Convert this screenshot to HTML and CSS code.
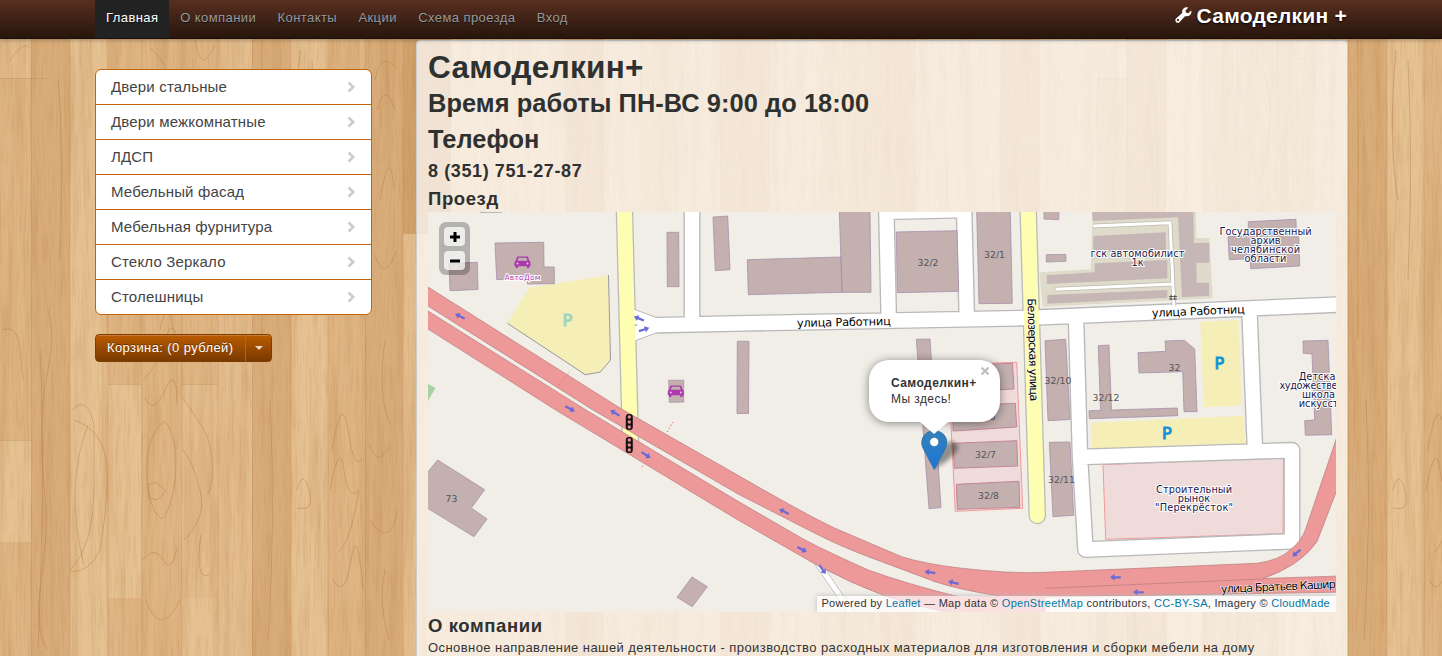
FILE: index.html
```html
<!DOCTYPE html>
<html lang="ru">
<head>
<meta charset="utf-8">
<title>Самоделкин+</title>
<link rel="stylesheet" href="styles.css">
</head>
<body>
<svg class="wood" width="1442" height="656" aria-hidden="true">
  <defs>
    <filter id="grain" x="0" y="0" width="100%" height="100%" color-interpolation-filters="sRGB">
      <feTurbulence type="fractalNoise" baseFrequency="0.1 0.005" numOctaves="3" seed="7"/>
      <feColorMatrix values="0 0 0 0 .72  0 0 0 0 .5  0 0 0 0 .26  .6 0 0 0 -.26"/>
    </filter>
    <filter id="fine" x="0" y="0" width="100%" height="100%" color-interpolation-filters="sRGB">
      <feTurbulence type="fractalNoise" baseFrequency="0.5 0.03" numOctaves="2" seed="3"/>
      <feColorMatrix values="0 0 0 0 .65  0 0 0 0 .43  0 0 0 0 .22  .4 0 0 0 -.18"/>
    </filter>
    <pattern id="planks" width="1096" height="656" patternUnits="userSpaceOnUse">
      <rect width="1096" height="656" fill="#e3bd8e"/>
      <g fill="#d9ad7a">
        <path d="M31 0h39v656H31zM252 0h39v656h-39zM365 0h38v656h-38zM565 0h38v656h-38zM720 0h50v656h-50zM880 0h36v656h-36zM1000 0h40v656h-40z"/>
        <path d="M403 0h48v234h-48z" fill="#d1a26c"/>
      </g>
      <g fill="#deb583">
        <path d="M108 0h34v656h-34zM142 0h39v656h-39zM181 0h37v384h-37zM328 0h37v656h-37zM0 78h31v362H0zM0 542h31v114H0zM640 0h38v656h-38zM820 0h60v656h-60z"/>
      </g>
      <g fill="#e6c293"><path d="M0 440h31v102H0zM108 384h33v214h-33zM181 598h37v58h-37zM70 0h36v656H70zM291 0h34v656h-34z"/></g>
      <g fill="none" stroke="#b9824c" stroke-opacity=".5">
        <path d="M147 471q0-38 18-50q14 18 10 60q-6 36-14 38q-14-12-14-48zM148 485l8-3 10 9-9 9-8-2zM143 560q12-15 20 0t14-12M145 398q8 18 20-8t12 14M143 380q14-12 22-40t15 10M146 600q14 40 34 0M160 330q8-40 14 4M181 395q12 18 20 30t10 27q4 30-3 42M183 450q10 12 17 40t-16 50M209 575q-15 5-8-40M330 490q10-52 14-20t15 20q-8 50-20 62M332 450q10-60 16-20t14 30M333 580q12 20 18-20t12 30M370 445q8 25 20 0M370 520q20 30 28-10M385 340q-8 60 6 85M385 570q-8 30 4 70M297 490q6-22 12 0t-12 18M72 410q16-16 22 16v60q0 60-24 84M74 420q28 10 32 40t-6 90q-10 22-30 22M88 425q-24 60-4 140M48 310q8 24 0 60t-6 80 4 60-5 70 7 70M40 350q6 110-2 300M58 80q6 60 2 180M10 60q14-20 20-12M2 330q16-6 18 20t4 30M150 48q26 20 24 70t-14 70M195 40q6 38 20 4M375 80q5-30 22-12M377 110q8-30 18 0M380 200q10-60 14-10M375 255q9 30 22-5M262 40v300M270 400q6 120-2 240M300 50q-8 90 2 150M312 60q5 100 0 220"/>
      </g>
      <g stroke="#b98a58" stroke-opacity=".35"><path d="M31.500 0v656M70 0v656M108 0v656M142 0v656M181.500 0v656M218 0v656M252.500 0v656M291 0v656M328 0v656M365.500 0v656M403 0v656M0 78.500h50M0 440.500h31M108 384.500h34M181 384.500h37M603 0v656"/></g>
    </pattern>
  </defs>
  <rect width="1442" height="656" fill="url(#planks)"/>
  <rect width="1442" height="656" filter="url(#grain)"/>
  <rect width="1442" height="656" filter="url(#fine)"/>
</svg>

<header class="navbar">
  <div class="container bar">
    <nav class="nav">
      <a class="active" href="#">Главная</a>
      <a href="#">О компании</a>
      <a href="#">Контакты</a>
      <a href="#">Акции</a>
      <a href="#">Схема проезда</a>
      <a href="#">Вход</a>
    </nav>
    <a class="brand" href="#">
      <svg width="17" height="17" viewBox="0 0 17 17"><path d="M16.300 3.600 13 6.200 10.900 5.600 10.500 3.400 13.400.6Q10.500-.2 8.500 1.500 6.700 3.300 7.200 6L1 11.600Q-.3 13.200 1 14.900 2.700 16.500 4.400 15.200L10 9.200Q13 9.800 15.200 8 16.900 6 16.300 3.600zM2.900 14.100a1 1 0 1 1 .1 0z" fill="#fff" fill-rule="evenodd"/></svg>
      <span>Самоделкин +</span>
    </a>
  </div>
</header>

<div class="container layout">
  <aside class="side">
    <ul class="menu">
      <li><a href="#">Двери стальные</a><svg width="9" height="12"><path d="M1.500 1.500 6.300 6l-4.800 4.500"/></svg></li>
      <li><a href="#">Двери межкомнатные</a><svg width="9" height="12"><path d="M1.500 1.500 6.300 6l-4.800 4.500"/></svg></li>
      <li><a href="#">ЛДСП</a><svg width="9" height="12"><path d="M1.500 1.500 6.300 6l-4.800 4.500"/></svg></li>
      <li><a href="#">Мебельный фасад</a><svg width="9" height="12"><path d="M1.500 1.500 6.300 6l-4.800 4.500"/></svg></li>
      <li><a href="#">Мебельная фурнитура</a><svg width="9" height="12"><path d="M1.500 1.500 6.300 6l-4.800 4.500"/></svg></li>
      <li><a href="#">Стекло Зеркало</a><svg width="9" height="12"><path d="M1.500 1.500 6.300 6l-4.800 4.500"/></svg></li>
      <li><a href="#">Столешницы</a><svg width="9" height="12"><path d="M1.500 1.500 6.300 6l-4.800 4.500"/></svg></li>
    </ul>
    <div class="cart"><span class="cart-label">Корзина: (0 рублей)</span><span class="cart-toggle"><i class="caret"></i></span></div>
  </aside>

  <main class="panel">
    <h1>Самоделкин+</h1>
    <h2 class="hours">Время работы ПН-ВС 9:00 до 18:00</h2>
    <h2 class="phone">Телефон</h2>
    <h4 class="number">8 (351) 751-27-87</h4>
    <h4 class="way">Проезд</h4>
    <div class="map">
      <svg class="tiles" width="908" height="400" viewBox="428 212 908 400">
        <defs>
          <path id="arrow" d="M-5.500 0l4.500-3.200v2.100h6.300v2.200h-6.300v2.100z" fill="#6a6ad6"/>
          <g id="car" fill="#ac39ac"><path d="M-5.300-5.500h10.600l1.600 4.300q1.100.5 1.100 2v3.500h-1.200v1.700h-2.300V4.300h-9V6h-2.300V4.300H-8V.8q0-1.500 1.100-2zM-4-4.200l-1 3H5l-1-3z" fill-rule="evenodd"/><circle cx="-5" cy="1.500" r="1" fill="#e7cbe4"/><circle cx="5" cy="1.500" r="1" fill="#e7cbe4"/></g>
          <g id="lights"><rect x="-3.500" y="-8" width="7" height="16" rx="3" fill="#111"/><circle cy="-5" r="1.700" fill="#e98d90"/><circle r="1.700" fill="#e98d90"/><circle cy="5" r="1.700" fill="#e98d90"/></g>
          <g id="streets">
            <path d="M657 325.200 735 323.500 1020 318.200 1040 317.300 1340 304.500M692 205V325M886.200 205 888.800 320M964 205 966.800 318M886 211.800 965 210M1076 318 1080 457 1085.500 549.500 1292 541.300V450.300L1080 457M1249.500 312 1255 451"/>
          </g>
          <path id="yellowroads" d="M624.300 205 630.500 445M1028 205 1037.300 515.500"/>
        </defs>
        <rect x="428" y="212" width="908" height="400" fill="#f1eee8"/>
        <path d="M428 384l7.500 4-7.500 13z" fill="#aad2a0"/>
        <path d="M480 212.300h22" stroke="#aaa"/>
        <g fill="#f6eeb7">
          <path d="M529 287.700 608 275.300 610.500 360 600.500 372 585.300 374.700 507.500 323.300zM1200.300 321.700 1238.300 320 1242 405.500 1204 407.300zM1091 422.700 1243.300 415.700 1245.300 444 1092 448.700z"/>
        </g>
        <path d="M608.500 275 610.500 360 600.300 372 585.300 374.700 507.500 323.300" fill="none" stroke="#999"/>
        <path d="M1092.700 212H1195.700L1196.300 238H1209.300L1212.700 298.300 1042.700 306.700 1039.300 272.300 1090.700 269.300z" fill="#dfdbcb"/>
        <g fill="#f0dbdb" stroke="#f29999">
          <path d="M948 364.500 1016.700 362.300 1022.700 508.300 955.300 511.300z"/>
          <path d="M1103 464.700 1283.500 457.500 1283 533.700 1105.700 539.300z"/>
        </g>
        <g fill="none" stroke="#b9b9b9" stroke-width="17" stroke-linejoin="round"><use href="#streets"/></g>
        <g fill="none" stroke="#b9b9b9" stroke-width="17.500" stroke-linecap="round"><use href="#yellowroads"/></g>
        <path d="M632 308.500 657 317.700 662 325 657 332.700 634 341.200z" fill="#fff" stroke="#b9b9b9"/>
        <path d="M817 562 855 618" stroke="#bbb" stroke-width="6.500"/><path d="M817 562 855 618" stroke="#fff" stroke-width="5"/>
        <g fill="none" stroke="#fff" stroke-width="14.300" stroke-linejoin="round"><use href="#streets"/></g>
        <g fill="none" stroke="#fdfeb2" stroke-width="15" stroke-linecap="round"><use href="#yellowroads"/></g>
        <path d="M634.500 325h3" stroke="#bbb" stroke-width="1.500"/>
        <g fill="#c6b6b5">
          <path d="M1092 212H1193.300L1194 243H1209.300V262.700H1196.300L1196.700 282.700H1209L1209.300 295.700 1182 297.300 1178 217.300 1092.700 221zM1093.300 236 1165.700 232.300 1166 250 1093.300 252.300zM1094.700 263.300 1167.300 260V278.300L1046.700 284V275.300L1094.700 272.300zM1047.300 295 1167.300 290V297.700L1047.300 303.700z"/>
        </g>
        <g fill="none" stroke-linejoin="round">
          <path d="M1093.300 226 1170 222.700 1174 306M1055 289.300 1173 284" stroke="#bdbab0" stroke-width="4.500"/>
          <path d="M1093.300 226 1170 222.700 1174 308M1055.500 289.300 1173 284" stroke="#fff" stroke-width="3"/>
          <path d="M1169 296.500h8M1169 299h8M1171 295v5M1174.500 295v5" stroke="#444" stroke-width=".8"/>
        </g>
        <g fill="#c3b0af" stroke="#a791ab" stroke-width=".8">
          <path d="M495 243 543.700 242.300 544 267H554.300V283.700L527.300 284V279.500H496.700z"/>
          <path d="M449 263.500 477.300 262.300 478 289.500 450 290.700z"/>
          <path d="M839.300 211H870L871 292.300H842zM747.300 259.700 841 257 842 292.300 748.300 294.700z"/>
          <path d="M896.300 232 957 230.700 958.700 291.300 897.300 292.700zM976.700 211H1010.300L1012.300 303.300 979 303.700z"/>
          <path d="M667 232.300H678.700L679 286.700H667.300zM713 217 727.700 216 730 269.700 715.300 270.700zM668.700 380.300H683.700V402L669.300 402.300zM737.300 341.300H749L748.500 413.500H737zM916.300 339.300 930 339 941 507.500 929 508.700z"/>
          <path d="M1044 211H1059L1058.700 219.700 1044 219zM1046.300 254.700 1065.700 254.300 1066 261.300 1046.300 262zM1248.300 221.700 1296 219.300 1296.300 236 1298.700 236.700 1299.700 266 1250.700 268.700 1250 258.700 1229.300 259.700 1228 236.700 1248.300 236z"/>
          <path d="M1045 340.700 1065.700 339.300 1070 419.500 1048 420.700zM1049.300 442.300 1070 442 1073.700 515.300 1053 516.700zM1098.300 345.700 1109 345 1111.500 410 1177.300 408 1177.700 415.700 1089.300 418.700 1089 410.700 1100.500 410.300z"/>
          <path d="M1138 352.700 1165.700 351.300 1165 341 1184.300 340.300 1194.700 349 1197 411.700H1184L1182.700 371.700 1139 373zM1303 341 1328 340.300 1331.700 434.700 1305.300 435.300 1304.700 420.700 1314.700 420 1312 354 1303.300 353.300z"/>
          <path d="M437.700 460 484.700 489.700 471.300 508 487 519 474 536.700 427 508V473zM692 577 707.300 586.700 692.300 606.700 677 597.300z"/>
        </g>
        <g fill="#c3b0af" stroke="#bd7f94" stroke-width=".9">
          <path d="M951 366 1012.500 363.300 1014 389 952 392zM953 406 1015.300 403.300 1016.700 427 953 431zM953 443.300 1016.700 440.700 1017.700 466 954.300 468.300zM956.300 484.300 1019 481.300 1019.700 507.300 957.300 509.300z"/>
        </g>
        <g fill="#ed9899" stroke="#b97b7c" stroke-width=".7">
          <path d="M420 282 622 409.300 738 475.300Q805 514 835 528.300L901.700 556.700Q925 564 960 568 1010 574 1045 572.300L1256.700 563.300Q1280 560 1290 550 1302 541 1306 528L1340 428V482L1317 541.700Q1300 566 1263 578.500L1340 576V592.200L1045 597 1045 620H985Q930 610 885 596 850 583 815 564L738 520 555.700 410 420 324V306L586 410 738 501.300 805 540Q830 553 868.300 570 910 585 960 597L1000 596Q960 590 935 581.700L868.300 556.700Q840 546 818.300 535L738 494 593 410 420 301z"/>
          <path d="M1045 588.300 1263 579" fill="none"/>
        </g>
        <path d="M557 388l13-17M642 467l6-8M667 432l6-10" stroke="#f26d6d" stroke-dasharray="1.500 2" fill="none"/>
        <use href="#arrow" transform="translate(460 316.300) rotate(28)"/>
        <use href="#arrow" transform="translate(639 318.500) rotate(22)"/>
        <use href="#arrow" transform="translate(644 329.500) rotate(162)"/>
        <use href="#arrow" transform="translate(570 408.800) rotate(208)"/>
        <use href="#arrow" transform="translate(615 413) rotate(30)"/>
        <use href="#arrow" transform="translate(646 455) rotate(212)"/>
        <use href="#arrow" transform="translate(784 511.500) rotate(28)"/>
        <use href="#arrow" transform="translate(802 549.500) rotate(208)"/>
        <use href="#arrow" transform="translate(822.500 569.500) rotate(234)"/>
        <use href="#arrow" transform="translate(930 572.300) rotate(8)"/>
        <use href="#arrow" transform="translate(953.500 582.700) rotate(12)"/>
        <use href="#arrow" transform="translate(1115.500 577.300)"/>
        <use href="#arrow" transform="translate(1138.500 592.300)"/>
        <use href="#arrow" transform="translate(1296.500 553) rotate(-40)"/>
        <use href="#arrow" transform="translate(1324 584.500) rotate(-3)"/>
        <use href="#lights" x="629.300" y="422"/><use href="#lights" x="629.300" y="445"/>
        <use href="#car" x="522.500" y="262"/><use href="#car" x="675.800" y="391"/>
        <text class="shop" x="522.500" y="280" textLength="36">АвтоДом</text>
        <text class="park pale" x="562.500" y="326">P</text>
        <text class="park" x="1214.500" y="369">P</text>
        <text class="park" x="1162" y="439">P</text>
        <g class="house">
          <text x="928" y="265.500">32/2</text><text x="994.500" y="257.500">32/1</text><text x="1058" y="383.500">32/10</text><text x="1106" y="400.500">32/12</text><text x="1174.500" y="371">32</text><text x="1061.500" y="482.500">32/11</text><text x="985.500" y="458">32/7</text><text x="988.500" y="499">32/8</text><text x="985" y="420">32/6</text><text x="451.500" y="501.500">73</text>
        </g>
        <g class="street">
          <text transform="translate(797 327) rotate(-1.200)" textLength="94">улица Работниц</text>
          <text transform="translate(1152 317) rotate(-2.400)" textLength="93">улица Работниц</text>
          <text transform="translate(1027.500 298.500) rotate(88.500)" textLength="103">Белозерская улица</text>
          <text transform="translate(1221 593) rotate(-2.500)" textLength="115">улица Братьев Кашир</text>
        </g>
        <g class="place">
          <text x="1137.500" y="257" textLength="94">гск автомобилист</text><text x="1137.500" y="266">1к</text>
          <text x="1265.500" y="234.500" textLength="92">Государственный</text><text x="1265.500" y="243.500">архив</text><text x="1265.500" y="252.500" textLength="69">челябинской</text><text x="1265.500" y="261.500">области</text>
          <text x="1194" y="493" textLength="76">Строительный</text><text x="1194" y="502">рынок</text><text x="1194" y="511" textLength="78">"Перекрёсток"</text>
          <text x="1320" y="379.500">Детская</text><text x="1320" y="388.500" textLength="81">художественная</text><text x="1318.500" y="397.500">школа</text><text x="1321.500" y="406.500">искусств</text>
        </g>
        <defs>
          <linearGradient id="pin" x2="0" y2="1"><stop stop-color="#3580b8"/><stop offset="1" stop-color="#1b76d8"/></linearGradient>
          <filter id="soft" x="-30%" y="-30%" width="160%" height="160%"><feGaussianBlur stdDeviation="2"/></filter>
        </defs>
        <path d="M935 468Q938 448 950 441 962 444 956 452 948 462 935 468z" fill="#000" opacity=".4" filter="url(#soft)"/>
        <path d="M934.300 469.500 924.500 451Q921.500 446 921.700 442.500A12.600 12 0 0 1 946.900 442.500Q947 446 944.200 451z" fill="url(#pin)" stroke="#2d6fa5" stroke-width=".8"/>
        <circle cx="934.200" cy="442" r="4.500" fill="#fff" stroke="#2f6f9f" stroke-width=".6"/>
      </svg>
      <div class="zoom"><span><svg width="10" height="10"><path d="M0 5h10M5 0v10"/></svg></span><span><svg width="10" height="10"><path d="M0 5h10"/></svg></span></div>
      <div class="popup"><b>Самоделкин+</b><span>Мы здесь!</span><svg class="close" width="8" height="8"><path d="M.5.5l7 7M7.500.5l-7 7"/></svg></div>
      <div class="credits">Powered by <a href="#">Leaflet</a> — Map data © <a href="#">OpenStreetMap</a> contributors, <a href="#">CC-BY-SA</a>, Imagery © <a href="#">CloudMade</a></div>
    </div>
    <h4 class="about">О компании</h4>
    <p>Основное направление нашей деятельности - производство расходных материалов для изготовления и сборки мебели на дому</p>
  </main>
</div>
</body>
</html>
```
FILE: styles.css
```css
* { box-sizing: border-box; }
html, body { margin: 0; height: 656px; overflow: hidden; }
body {
  position: relative;
  font: 13px/18px "Liberation Sans", Arial, sans-serif;
  letter-spacing: .43px;
  color: #333;
  background: #dfb685;
}
a { text-decoration: none; color: inherit; }
ul, h1, h2, h4, p { margin: 0; padding: 0; }
.wood { position: absolute; inset: 0; z-index: -1; }
.container { width: 1253px; margin-left: 95px; }
.navbar {
  position: relative;
  height: 39px;
  background: linear-gradient(#582f20, #27150d);
  border-bottom: 1px solid #1c0e08;
  box-shadow: 0 1px 4px rgba(0,0,0,.3);
}
.bar { display: flex; justify-content: space-between; }
.nav { display: flex; }
.nav a { height: 38px; padding: 9px 10.300px 0 11px; color: #999; text-shadow: 0 1px 0 #111; white-space: nowrap; }
.nav .active { padding-right: 10.700px; background: #222; color: #fff; }
.brand { display: flex; gap: 5px; padding: 7px 1px 0 0; font-size: 21px; letter-spacing: .25px; font-weight: bold; color: #fff; text-shadow: 0 1px 2px #000; }
.layout { display: flex; }
.side { width: 277px; margin-right: 44px; padding-top: 30px; }
.menu { list-style: none; background: #fff; border: 1px solid #c1640a; border-radius: 6px; }
.menu li { display: flex; align-items: center; justify-content: space-between; height: 35px; padding: 0 15px; font-size: 15px; letter-spacing: .17px; color: #444; border-bottom: 1px solid #c1640a; }
.menu li:last-child { border-bottom: 0; height: 34px; }
.menu svg { fill: none; stroke: #ccc; stroke-width: 2.5; }
.cart { display: flex; width: 177px; height: 28px; margin-top: 19px; border: 1px solid #7d3d00; border-radius: 4px; background: linear-gradient(#bb5c00, #783900); box-shadow: inset 0 1px 0 rgba(255,255,255,.2); color: #fff; text-shadow: 0 -1px 0 rgba(0,0,0,.4); }
.cart-label { flex: 1; padding: 4px 0 0 11px; letter-spacing: .4px; white-space: nowrap; }
.cart-toggle { width: 26px; border-left: 1px solid #b5651d; display: flex; align-items: center; justify-content: center; }
.caret { border: 4px solid transparent; border-top-color: #eed9c3; border-bottom: 0; }
.panel { width: 932px; height: 640px; margin-top: 1px; padding: 9px 11px 0; background: rgba(255,255,255,.71); border: 1px solid #ccc; border-radius: 4px; white-space: nowrap; }
h1 { font-size: 31.500px; line-height: 36px; letter-spacing: .3px; margin-top: -1px; }
h2 { font-size: 25.400px; line-height: 36px; letter-spacing: .07px; }
.number { margin-top: 1px; }
h1, h2, h4 { color: #2f3130; }
h4 { font-size: 18px; line-height: 27px; letter-spacing: .6px; }
.way, .about { font-size: 18.500px; }
.map { position: relative; width: 908px; height: 400px; overflow: hidden; }
.tiles { display: block; }
.tiles text { letter-spacing: 0; font-family: "DejaVu Sans", sans-serif; }
.house text { font-size: 9.300px; fill: #555; text-anchor: middle; }
.street text { font-size: 11.300px; fill: #000; stroke: #fff; stroke-width: 1px; paint-order: stroke; }
.place text { font-size: 9.800px; fill: #1a1a50; text-anchor: middle; stroke: #fff; stroke-width: 2px; paint-order: stroke; }
.tiles .shop { font-size: 7.500px; fill: #ac39ac; text-anchor: middle; stroke: #fff; stroke-width: 2px; paint-order: stroke; }
.tiles .park { font-size: 16px; fill: #1292d8; stroke: #1292d8; stroke-width: 1px; }
.tiles .pale { fill: #9fd2c2; stroke: #9fd2c2; }
.zoom { position: absolute; left: 11px; top: 10px; width: 31px; height: 53px; padding: 5px; border-radius: 7px; background: rgba(0,0,0,.25); display: grid; gap: 5px; }
.zoom span { display: grid; place-items: center; width: 21px; height: 19px; border-radius: 4px; background: rgba(255,255,255,.75); }
.zoom svg { stroke: #000; stroke-width: 3; }
.popup { position: absolute; left: 441px; top: 148px; width: 131px; height: 62px; padding: 15px 0 0 22px; border-radius: 20px; background: #fff; box-shadow: 0 1px 10px rgba(0,0,0,.45); font-size: 12px; line-height: 16px; display: flex; flex-direction: column; }
.popup::after { content: ""; position: absolute; left: 51px; top: 62px; border: 14px solid transparent; border-top: 12px solid #fff; border-bottom: 0; }
.close { position: absolute; right: 11px; top: 7px; stroke: #bbb; stroke-width: 2; }
.credits { position: absolute; right: 0; bottom: 0; height: 16px; padding: 0 6px 0 4px; font-size: 11px; line-height: 15px; letter-spacing: .28px; background: rgba(255,255,255,.7); box-shadow: 0 0 5px #bbb; }
.credits a { color: #0078a8; }
```
